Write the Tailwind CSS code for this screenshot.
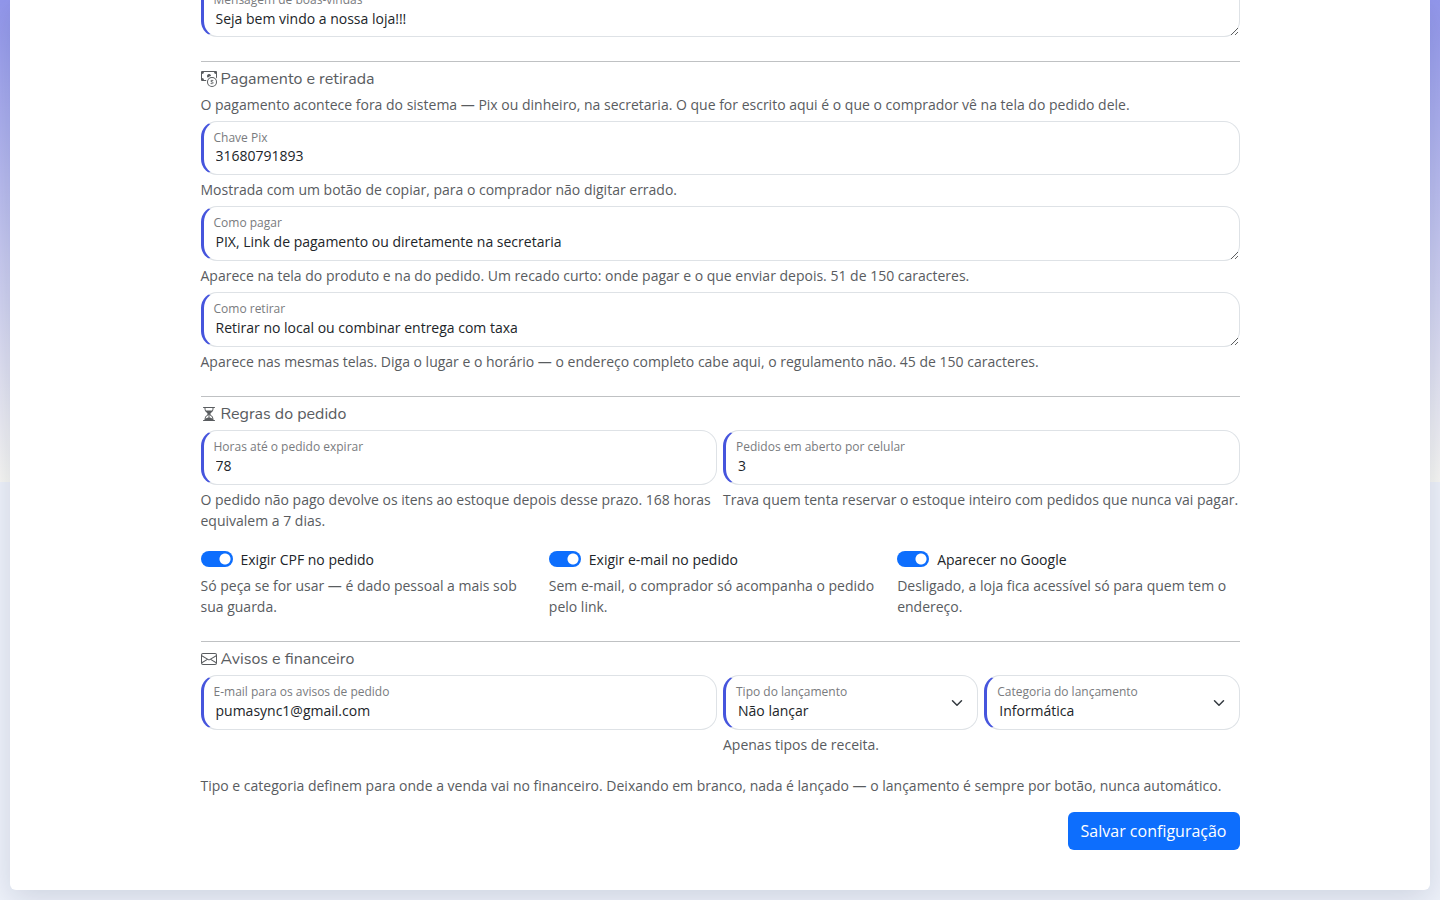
<!DOCTYPE html>
<html lang="pt-BR">
<head>
<meta charset="utf-8">
<meta name="viewport" content="width=device-width, initial-scale=1">
<title>Configuração da loja</title>
<script src="https://cdn.jsdelivr.net/npm/@tailwindcss/browser@4"></script>
</head>
<body class="bg-[#eef2fa] bg-[linear-gradient(180deg,#9297ec,#f8f8f4)] bg-[length:100%_482px] bg-no-repeat px-[10px] pb-[10px] font-['Open_Sans',sans-serif] text-sm leading-[21px] text-[#595c5f]">
<main class="rounded-b-md bg-white pb-10 shadow-[0_8px_32px_rgba(8,21,66,0.14)]">
<form class="mx-auto flow-root max-w-[1039px]">

  <div class="relative -mt-[17px]">
    <label for="msg" class="absolute left-[13px] top-2 text-xs leading-[18px] text-[#797b7e]">Mensagem de boas-vindas</label>
    <textarea id="msg" class="block h-[54px] w-full rounded-2xl border border-l-3 border-[#dee2e6] border-l-[#4655dd] px-3 pt-6 text-[#212529]">Seja bem vindo a nossa loja!!!</textarea>
  </div>

  <section class="mt-6 border-t border-[#bfc1c3] pt-[5px]">
    <h2 class="mb-[3px] flex items-center gap-1 font-[Nunito,Lato,sans-serif] text-base">
      <svg class="size-4" viewBox="0 0 16 16" fill="currentColor" aria-hidden="true"><path fill-rule="evenodd" d="M11 15a4 4 0 1 0 0-8 4 4 0 0 0 0 8m5-4a5 5 0 1 1-10 0 5 5 0 0 1 10 0"/><path d="M9.438 11.944c.047.596.518 1.06 1.363 1.116v.44h.375v-.443c.875-.061 1.386-.529 1.386-1.207 0-.618-.39-.936-1.09-1.1l-.296-.07v-1.2c.376.043.614.248.671.532h.658c-.047-.575-.54-1.024-1.329-1.073V8.5h-.375v.45c-.747.073-1.255.522-1.255 1.158 0 .562.378.92 1.007 1.066l.248.061v1.272c-.384-.058-.639-.27-.696-.563h-.668zm1.36-1.354c-.369-.085-.569-.26-.569-.522 0-.294.216-.514.572-.578v1.1zm.432.746c.449.104.655.272.655.569 0 .339-.257.571-.709.614v-1.195z"/><path d="M1 0a1 1 0 0 0-1 1v8a1 1 0 0 0 1 1h4.083q.088-.517.258-1H3a2 2 0 0 0-2-2V3a2 2 0 0 0 2-2h10a2 2 0 0 0 2 2v3.528c.38.34.717.728 1 1.154V1a1 1 0 0 0-1-1z"/><path d="M9.998 5.083 10 5a2 2 0 1 0-3.132 1.65 6 6 0 0 1 3.13-1.567"/></svg>
      Pagamento e retirada
    </h2>
    <p>O pagamento acontece fora do sistema — Pix ou dinheiro, na secretaria. O que for escrito aqui é o que o comprador vê na tela do pedido dele.</p>
    <div class="mt-[6px] flex flex-col gap-[6px]">
      <div>
        <div class="relative">
          <label for="pix" class="absolute left-[13px] top-2 text-xs leading-[18px] text-[#797b7e]">Chave Pix</label>
          <input id="pix" type="text" value="31680791893" class="block h-[54px] w-full rounded-2xl border border-l-3 border-[#dee2e6] border-l-[#4655dd] px-3 pt-[14px] text-[#212529]">
        </div>
        <p class="mt-1">Mostrada com um botão de copiar, para o comprador não digitar errado.</p>
      </div>
      <div>
        <div class="relative">
          <label for="pagar" class="absolute left-[13px] top-2 text-xs leading-[18px] text-[#797b7e]">Como pagar</label>
          <textarea id="pagar" class="block h-[55px] w-full rounded-2xl border border-l-3 border-[#dee2e6] border-l-[#4655dd] px-3 pt-6 text-[#212529]">PIX, Link de pagamento ou diretamente na secretaria</textarea>
        </div>
        <p class="mt-1">Aparece na tela do produto e na do pedido. Um recado curto: onde pagar e o que enviar depois. 51 de 150 caracteres.</p>
      </div>
      <div>
        <div class="relative">
          <label for="retirar" class="absolute left-[13px] top-2 text-xs leading-[18px] text-[#797b7e]">Como retirar</label>
          <textarea id="retirar" class="block h-[55px] w-full rounded-2xl border border-l-3 border-[#dee2e6] border-l-[#4655dd] px-3 pt-6 text-[#212529]">Retirar no local ou combinar entrega com taxa</textarea>
        </div>
        <p class="mt-1">Aparece nas mesmas telas. Diga o lugar e o horário — o endereço completo cabe aqui, o regulamento não. 45 de 150 caracteres.</p>
      </div>
    </div>
  </section>

  <section class="mt-6 border-t border-[#bfc1c3] pt-[5px]">
    <h2 class="mb-1 flex items-center gap-1 font-[Nunito,Lato,sans-serif] text-base">
      <svg class="size-4" viewBox="0 0 16 16" fill="currentColor" aria-hidden="true"><path d="M2.5 15a.5.5 0 1 1 0-1h1v-1a4.5 4.5 0 0 1 2.557-4.06c.29-.139.443-.377.443-.59v-.7c0-.213-.154-.451-.443-.59A4.5 4.5 0 0 1 3.5 3V2h-1a.5.5 0 0 1 0-1h11a.5.5 0 0 1 0 1h-1v1a4.5 4.5 0 0 1-2.557 4.06c-.29.139-.443.377-.443.59v.7c0 .213.154.451.443.59A4.5 4.5 0 0 1 12.5 13v1h1a.5.5 0 0 1 0 1zm2-13v1c0 .537.12 1.045.337 1.5h6.326c.216-.455.337-.963.337-1.5V2zm3 6.35c0 .701-.478 1.236-1.011 1.492A3.5 3.5 0 0 0 4.5 13s.866-1.299 3-1.48zm1 0v3.17c2.134.181 3 1.48 3 1.48a3.5 3.5 0 0 0-1.989-3.158C8.978 9.586 8.5 9.052 8.5 8.351z"/></svg>
      Regras do pedido
    </h2>
    <div class="grid grid-cols-2 gap-[6px]">
      <div>
        <div class="relative">
          <label for="horas" class="absolute left-[13px] top-2 text-xs leading-[18px] text-[#797b7e]">Horas até o pedido expirar</label>
          <input id="horas" type="text" inputmode="numeric" value="78" class="block h-[55px] w-full rounded-2xl border border-l-3 border-[#dee2e6] border-l-[#4655dd] px-3 pt-4 text-[#212529]">
        </div>
        <p class="mt-1">O pedido não pago devolve os itens ao estoque depois desse prazo. 168 horas equivalem a 7 dias.</p>
      </div>
      <div>
        <div class="relative">
          <label for="abertos" class="absolute left-[13px] top-2 text-xs leading-[18px] text-[#797b7e]">Pedidos em aberto por celular</label>
          <input id="abertos" type="text" inputmode="numeric" value="3" class="block h-[55px] w-full rounded-2xl border border-l-3 border-[#dee2e6] border-l-[#4655dd] px-3 pt-4 text-[#212529]">
        </div>
        <p class="mt-1">Trava quem tenta reservar o estoque inteiro com pedidos que nunca vai pagar.</p>
      </div>
    </div>
    <div class="mt-[18px] grid grid-cols-3 gap-[6px]">
      <div>
        <label class="flex items-start gap-2 text-[#212529]"><input type="checkbox" role="switch" checked class="mt-0.5 h-4 w-8 appearance-none rounded-full bg-[#0d6efd] bg-[radial-gradient(circle_at_24px_8px,#fff_5px,transparent_6px)]">Exigir CPF no pedido</label>
        <p class="mt-[5px]">Só peça se for usar — é dado pessoal a mais sob sua guarda.</p>
      </div>
      <div>
        <label class="flex items-start gap-2 text-[#212529]"><input type="checkbox" role="switch" checked class="mt-0.5 h-4 w-8 appearance-none rounded-full bg-[#0d6efd] bg-[radial-gradient(circle_at_24px_8px,#fff_5px,transparent_6px)]">Exigir e-mail no pedido</label>
        <p class="mt-[5px]">Sem e-mail, o comprador só acompanha o pedido pelo link.</p>
      </div>
      <div>
        <label class="flex items-start gap-2 text-[#212529]"><input type="checkbox" role="switch" checked class="mt-0.5 h-4 w-8 appearance-none rounded-full bg-[#0d6efd] bg-[radial-gradient(circle_at_24px_8px,#fff_5px,transparent_6px)]">Aparecer no Google</label>
        <p class="mt-[5px]">Desligado, a loja fica acessível só para quem tem o endereço.</p>
      </div>
    </div>
  </section>

  <section class="mt-6 border-t border-[#bfc1c3] pt-[5px]">
    <h2 class="mb-1 flex items-center gap-1 font-[Nunito,Lato,sans-serif] text-base">
      <svg class="size-4" viewBox="0 0 16 16" fill="currentColor" aria-hidden="true"><path d="M0 4a2 2 0 0 1 2-2h12a2 2 0 0 1 2 2v8a2 2 0 0 1-2 2H2a2 2 0 0 1-2-2zm2-1a1 1 0 0 0-1 1v.217l7 4.2 7-4.2V4a1 1 0 0 0-1-1zm13 2.383-4.708 2.825L15 11.105zm-.034 6.876-5.64-3.471L8 9.583l-1.326-.795-5.64 3.47A1 1 0 0 0 2 13h12a1 1 0 0 0 .966-.741M1 11.105l4.708-2.897L1 5.383z"/></svg>
      Avisos e financeiro
    </h2>
    <div class="grid grid-cols-2 gap-[6px]">
      <div class="relative">
        <label for="email" class="absolute left-[13px] top-2 text-xs leading-[18px] text-[#797b7e]">E-mail para os avisos de pedido</label>
        <input id="email" type="email" value="pumasync1@gmail.com" class="block h-[55px] w-full rounded-2xl border border-l-3 border-[#dee2e6] border-l-[#4655dd] px-3 pt-4 text-[#212529]">
      </div>
      <div class="grid grid-cols-2 gap-[6px]">
        <div>
          <div class="relative">
            <label for="tipo" class="absolute left-[13px] top-2 text-xs leading-[18px] text-[#797b7e]">Tipo do lançamento</label>
            <select id="tipo" class="block h-[55px] w-full appearance-none rounded-2xl border border-l-3 border-[#dee2e6] border-l-[#4655dd] pl-3 pr-9 pt-4 text-[#212529]"><option>Não lançar</option></select>
            <svg class="pointer-events-none absolute right-[13px] top-[22px] h-3 w-4" viewBox="0 0 16 16" fill="none" stroke="#343a40" stroke-width="2" stroke-linecap="round" stroke-linejoin="round" aria-hidden="true"><path d="m2 5 6 6 6-6"/></svg>
          </div>
          <p class="mt-1">Apenas tipos de receita.</p>
        </div>
        <div>
          <div class="relative">
            <label for="categoria" class="absolute left-[13px] top-2 text-xs leading-[18px] text-[#797b7e]">Categoria do lançamento</label>
            <select id="categoria" class="block h-[55px] w-full appearance-none rounded-2xl border border-l-3 border-[#dee2e6] border-l-[#4655dd] pl-3 pr-9 pt-4 text-[#212529]"><option>Informática</option></select>
            <svg class="pointer-events-none absolute right-[13px] top-[22px] h-3 w-4" viewBox="0 0 16 16" fill="none" stroke="#343a40" stroke-width="2" stroke-linecap="round" stroke-linejoin="round" aria-hidden="true"><path d="m2 5 6 6 6-6"/></svg>
          </div>
        </div>
      </div>
    </div>
    <p class="mt-5">Tipo e categoria definem para onde a venda vai no financeiro. Deixando em branco, nada é lançado — o lançamento é sempre por botão, nunca automático.</p>
  </section>

  <div class="mt-4 flex justify-end">
    <button type="submit" class="h-[38px] rounded-md bg-[#0d6efd] px-[13px] text-base text-white">Salvar configuração</button>
  </div>
</form>
</main>
</body>
</html>
